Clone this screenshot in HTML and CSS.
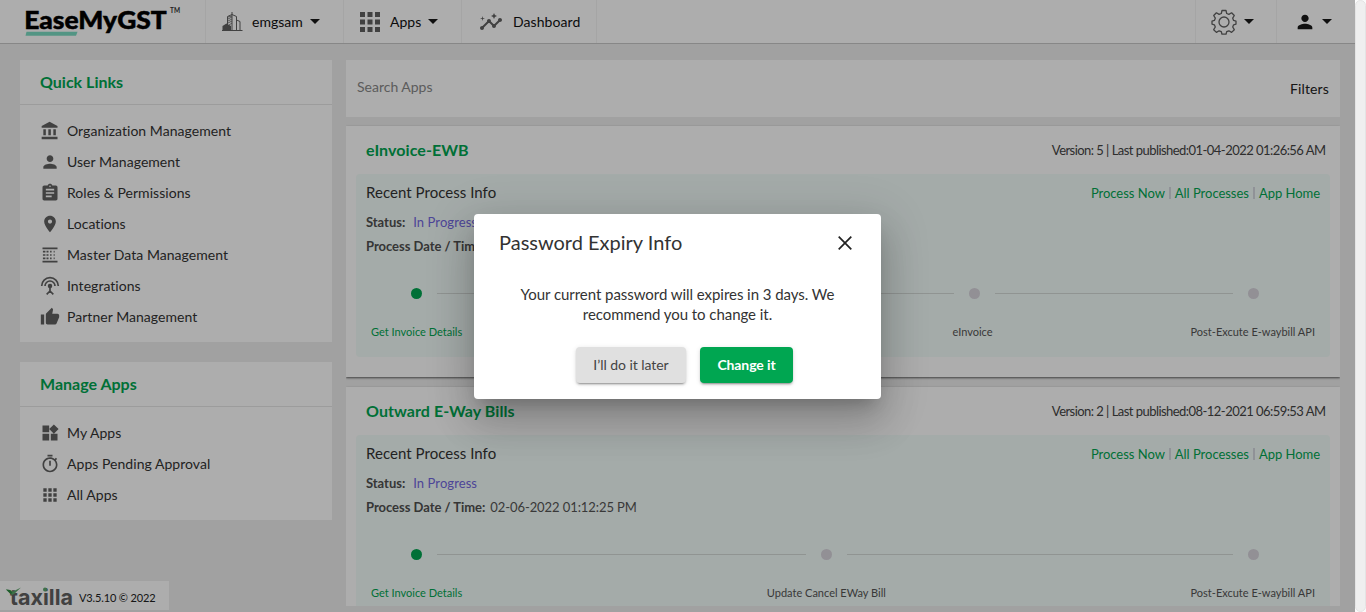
FILE: index.html
```html
<!DOCTYPE html>
<html lang="en">
<head>
<meta charset="utf-8">
<title>EaseMyGST</title>
<link rel="stylesheet" href="styles.css">
</head>
<body>
<svg class="defs" width="0" height="0">
  <symbol id="grid" viewBox="0 0 24 24"><path d="M4 8h4V4H4v4zm6 12h4v-4h-4v4zm-6 0h4v-4H4v4zm0-6h4v-4H4v4zm6 0h4v-4h-4v4zm6-10v4h4V4h-4zm-6 4h4V4h-4v4zm6 6h4v-4h-4v4zm0 6h4v-4h-4v4z"/></symbol>
  <symbol id="person" viewBox="0 0 24 24"><path d="M12 12c2.210 0 4-1.790 4-4s-1.790-4-4-4-4 1.790-4 4 1.790 4 4 4zm0 2c-2.670 0-8 1.340-8 4v2h16v-2c0-2.660-5.330-4-8-4z"/></symbol>
</svg>
<div class="page">
  <header class="topbar">
    <div class="brand">
      <svg width="165" height="42" viewBox="0 0 165 42">
        <path d="M1.500 31.800H52.500l-1.500 4H.5z" fill="#7bdcc3"/>
        <text class="logo" x="-.8" y="29.300" textLength="142.500" lengthAdjust="spacingAndGlyphs">EaseMyGST</text>
        <text class="tm" x="145" y="12.500" textLength="10" lengthAdjust="spacingAndGlyphs">TM</text>
      </svg>
    </div>
    <div class="nav org">
      <svg width="21" height="20" viewBox="0 0 21 20" fill="none" stroke="#606060"><path d="M0 18.500h20.500M5.500 14V4.500l4.500-2 4.500 2V18M10 0v18M14.500 8l3.500 1.500V18"/><path fill="#606060" stroke="none" d="M.5 14l4-2.500 4.500 2.500v4.500H.5z"/><path d="M6 7l4-2M6 9l4-2M6 11l4-2M7 13l3-2M6 5l4-1" stroke-width=".8"/></svg>
      <span>emgsam</span><i class="caret"></i>
    </div>
    <div class="nav apps">
      <svg width="30" height="30" class="ic"><use href="#grid"/></svg>
      <span>Apps</span><i class="caret"></i>
    </div>
    <div class="nav dash">
      <svg width="24" height="24" viewBox="0 0 24 24" class="ic"><path d="M21 8c-1.450 0-2.260 1.440-1.930 2.510l-3.550 3.560c-.3-.09-.74-.09-1.040 0l-2.550-2.550C12.270 10.450 11.460 9 10 9c-1.450 0-2.270 1.440-1.930 2.520l-4.560 4.550C2.440 15.740 1 16.550 1 18c0 1.100.9 2 2 2 1.450 0 2.260-1.440 1.930-2.510l4.550-4.560c.3.09.74.09 1.040 0l2.550 2.550C12.730 16.550 13.540 18 15 18c1.450 0 2.270-1.440 1.930-2.520l3.560-3.550C21.560 12.260 23 11.450 23 10c0-1.100-.9-2-2-2z"/><path d="M15 9l.94-2.070L18 6l-2.060-.93L15 3l-.92 2.070L12 6l2.080.93zM3.500 11L4 9l2-.5L4 8l-.5-2L3 8l-2 .5L3 9z"/></svg>
      <span>Dashboard</span>
    </div>
    <div class="nav gear">
      <svg width="26" height="26" viewBox="0 0 26 26" fill="none" stroke="#616161" stroke-width="1.300"><circle cx="13" cy="13" r="5"/><path stroke-linejoin="round" d="M11 1.500h4l.7 3 2.200.9 2.700-1.600 2.700 2.700-1.600 2.700.9 2.200 2.400.7v3l-2.400.7-.9 2.200 1.600 2.700-2.700 2.700-2.700-1.600-2.200.9-.7 2.500h-4l-.7-2.500-2.200-.9-2.700 1.600-2.700-2.700 1.600-2.700-.9-2.200-2.400-.7v-3l2.400-.7.9-2.200-1.600-2.700 2.700-2.700 2.700 1.600 2.200-.9z"/></svg>
      <i class="caret"></i>
    </div>
    <div class="nav user">
      <svg width="22" height="22" class="dark"><use href="#person"/></svg><i class="caret"></i>
    </div>
  </header>
  <main class="content">
    <aside class="side">
      <section class="box quick">
        <h2>Quick Links</h2>
        <ul>
          <li><svg viewBox="0 0 24 24"><path d="M4 10v7h3v-7H4zm6 0v7h3v-7h-3zM2 22h19v-3H2v3zm14-12v7h3v-7h-3zm-4.500-9L2 6v2h19V6l-9.500-5z"/></svg>Organization Management</li>
          <li><svg><use href="#person"/></svg>User Management</li>
          <li><svg viewBox="0 0 24 24"><path d="M19 3h-4.180C14.400 1.840 13.300 1 12 1c-1.300 0-2.400.84-2.820 2H5c-1.100 0-2 .9-2 2v14c0 1.100.9 2 2 2h14c1.100 0 2-.9 2-2V5c0-1.100-.9-2-2-2zm-7 0c.55 0 1 .45 1 1s-.45 1-1 1-1-.45-1-1 .45-1 1-1zm2 14H7v-2h7v2zm3-4H7v-2h10v2zm0-4H7V7h10v2z"/></svg>Roles &amp; Permissions</li>
          <li><svg viewBox="0 0 24 24"><path d="M12 2C8.130 2 5 5.130 5 9c0 5.250 7 13 7 13s7-7.750 7-13c0-3.870-3.130-7-7-7zm0 9.500c-1.380 0-2.500-1.120-2.500-2.500s1.120-2.500 2.500-2.500 2.500 1.120 2.500 2.500-1.120 2.500-2.500 2.500z"/></svg>Locations</li>
          <li><svg viewBox="0 0 24 24"><path d="M3 3h18v2H3zM3 19h18v2H3z"/><g fill="none" stroke="#616161" stroke-dasharray="2 2"><path stroke-width="3" d="M5 7v11"/><path stroke-width="2.400" d="M9 7v11"/><path stroke-width="1.800" d="M13 7v11"/><path stroke-width="1.200" d="M17 7v11"/></g></svg>Master Data Management</li>
          <li><svg viewBox="0 0 24 24" fill="none" stroke="#616161" stroke-width="2"><path d="M2 12a10 10 0 0 1 20 0M6 12a6 6 0 0 1 12 0M12 13v5l-4 4M12 18l4 4"/><circle cx="12" cy="12" r="1.700" fill="#616161"/></svg>Integrations</li>
          <li><svg viewBox="0 0 24 24"><path d="M1 21h4V9H1v12zm22-11c0-1.100-.9-2-2-2h-6.310l.95-4.570.03-.32c0-.41-.17-.79-.44-1.060L14.170 1 7.590 7.590C7.220 7.950 7 8.450 7 9v10c0 1.100.9 2 2 2h9c.83 0 1.540-.5 1.840-1.220l3.020-7.050c.09-.23.14-.47.14-.73v-2z"/></svg>Partner Management</li>
        </ul>
      </section>
      <section class="box manage">
        <h2>Manage Apps</h2>
        <ul>
          <li><svg viewBox="0 0 24 24"><path d="M13 13v8h8v-8h-8zM3 21h8v-8H3v8zM3 3v8h8V3H3zm13.660-1.310L11 7.340 16.660 13l5.660-5.660-5.660-5.650z"/></svg>My Apps</li>
          <li><svg viewBox="0 0 24 24"><path d="M15 1H9v2h6V1zm-4 13h2V8h-2v6zm8.030-6.610l1.420-1.420c-.43-.51-.9-.99-1.410-1.410l-1.420 1.420C16.070 4.740 14.120 4 12 4c-4.970 0-9 4.030-9 9s4.020 9 9 9 9-4.030 9-9c0-2.120-.74-4.070-1.970-5.610zM12 20c-3.870 0-7-3.130-7-7s3.130-7 7-7 7 3.130 7 7-3.130 7-7 7z"/></svg>Apps Pending Approval</li>
          <li><svg><use href="#grid"/></svg>All Apps</li>
        </ul>
      </section>
    </aside>
    <div class="main">
      <section class="search"><span class="ph">Search Apps</span><span class="filters">Filters</span></section>
      <article class="card">
        <div class="head"><h3>eInvoice-EWB</h3><span class="ver">Version: 5 | Last published:01-04-2022 01:26:56 AM</span></div>
        <div class="panel">
          <div class="row"><h4>Recent Process Info</h4><div class="links"><a>Process Now</a><i></i><a>All Processes</a><i></i><a>App Home</a></div></div>
          <p><b>Status:</b><span class="prog">In Progress</span></p>
          <p><b>Process Date / Time:</b></p>
          <div class="track"><i class="dot on"></i><i class="line"></i><i class="dot"></i><i class="line"></i><i class="dot"></i><i class="line"></i><i class="dot"></i></div>
          <div class="labels four"><span class="on">Get Invoice Details</span><span>eInvoice</span><span>Post-Excute E-waybill API</span></div>
        </div>
      </article>
      <article class="card">
        <div class="head"><h3>Outward E-Way Bills</h3><span class="ver">Version: 2 | Last published:08-12-2021 06:59:53 AM</span></div>
        <div class="panel">
          <div class="row"><h4>Recent Process Info</h4><div class="links strong"><a>Process Now</a><i></i><a>All Processes</a><i></i><a>App Home</a></div></div>
          <p><b>Status:</b><span class="prog">In Progress</span></p>
          <p><b>Process Date / Time:</b><span class="date">02-06-2022 01:12:25 PM</span></p>
          <div class="track three"><i class="dot on"></i><i class="line"></i><i class="dot"></i><i class="line"></i><i class="dot"></i></div>
          <div class="labels"><span class="on">Get Invoice Details</span><span>Update Cancel EWay Bill</span><span>Post-Excute E-waybill API</span></div>
        </div>
      </article>
    </div>
  </main>
  <footer class="version">
    <svg width="68" height="24" viewBox="0 0 68 24"><text class="taxilla" x="4" y="19.500" textLength="63" lengthAdjust="spacingAndGlyphs">taxilla</text><path d="M0 4.500l4 .5 3 1.500L15 2.500 8 9l-2 1z" fill="#5da66b"/><path d="M0 4.500l4 .5 2.500 3-2 1z" fill="#2f8a42"/><circle cx="39" cy="4.500" r="2" fill="#5da66b"/></svg>
    <span>V3.5.10 © 2022</span>
  </footer>
</div>
<div class="scrollbar"><div class="thumb"></div></div>
<div class="overlay">
  <div class="modal">
    <div class="mhead"><h1>Password Expiry Info</h1><svg width="14" height="14" viewBox="0 0 14 14"><path d="M.7.7l12.600 12.600M13.300.7L.7 13.300" stroke="#222" stroke-width="1.700"/></svg></div>
    <p>Your current password will expires in 3 days. We<br>recommend you to change it.</p>
    <div class="actions"><button class="later">I’ll do it later</button><button class="change">Change it</button></div>
  </div>
</div>
</body>
</html>
```
FILE: styles.css
```css
* { box-sizing: border-box; }
body { margin: 0; height: 612px; overflow: hidden; display: flex; background: #ededed; font: 14px/20px Lato, "Liberation Sans", sans-serif; color: #222; }
h1, h2, h3, h4, p, ul { margin: 0; padding: 0; font-weight: 400; }
svg { display: block; flex: none; }
.defs { position: absolute; }
.page { width: 1355px; height: 612px; overflow: hidden; }
.topbar { height: 44px; background: #fff; border-bottom: 1px solid #c8c8c8; display: flex; }
.brand { width: 206px; padding-left: 25px; border-right: 1px solid #f3f3f3; }
.logo { font: 900 25.5px Lato, sans-serif; fill: #000; stroke: #000; stroke-width: .5px; }
.tm { font: 700 7px Lato, sans-serif; fill: #333; }
.nav { display: flex; align-items: center; border-right: 1px solid #f3f3f3; color: #111; }
.ic { fill: #616161; }
.dark { fill: #181818; }
.caret { border: 5px solid transparent; border-top-color: #181818; border-bottom: 0; flex: none; }
.org { width: 138px; padding-left: 16px; }
.org span { width: 51px; margin: 0 7px 0 9px; }
.apps { width: 118px; padding-left: 11px; }
.apps span { width: 31px; margin: 0 7px 0 5px; }
.dash { width: 135px; padding-left: 17px; }
.dash span { margin-left: 10px; letter-spacing: .08px; }
.gear { width: 82px; margin-left: auto; border-left: 1px solid #f3f3f3; padding-left: 15px; gap: 7px; }
.user { width: 78px; border: 0; padding-left: 17px; gap: 6px; }
.content { display: flex; padding: 16px 15px 0 20px; gap: 14px; }
.side { width: 312px; flex: none; }
.box { background: #fff; margin-bottom: 20px; }
.box h2 { height: 45px; padding: 12px 20px 0; border-bottom: 1px solid #e6e6e6; font-size: 16px; font-weight: 700; color: #00a651; }
.box ul { list-style: none; padding: 10px 20px; }
.quick ul { height: 237px; }
.manage ul { height: 113px; }
.box li { height: 31px; display: flex; align-items: center; gap: 7px; color: #333; letter-spacing: .04px; }
.box li svg { width: 20px; height: 20px; fill: #616161; }
.box li svg[fill="none"] { fill: none; }
.main { width: 994px; height: 546px; overflow: hidden; }
.search { height: 57px; background: #fff; margin-bottom: 9px; padding: 17px 11px 0; display: flex; justify-content: space-between; }
.ph { color: #888; }
.filters { padding-top: 2px; letter-spacing: .15px; }
.card { background: #fff; height: 251px; margin-bottom: 10px; padding: 14px 10px 0; box-shadow: 0 1px 2px rgba(0,0,0,.6); }
.head { display: flex; justify-content: space-between; padding: 0 5px 0 10px; height: 34px; }
.head h3 { font-size: 16px; font-weight: 700; color: #00a651; letter-spacing: .07px; }
.ver { font-size: 13px; color: #444; letter-spacing: -.54px; margin-right: -.5px; }
.panel { height: 183px; background: #f2fcf9; border-radius: 4px; padding: 8px 10px 0; color: #555; font-size: 13px; }
.row { display: flex; justify-content: space-between; height: 28px; }
.row h4 { font-size: 15px; color: #333; letter-spacing: .04px; }
.links { display: flex; align-items: center; height: 20px; color: #00a651; padding-top: 2px; letter-spacing: -.03px; }
.links i { width: 2px; height: 12px; background: #d4d8df; margin: 0 4px; }
.panel p { height: 24px; line-height: 24px; white-space: nowrap; }
.panel b { font-weight: 700; color: #505050; margin-right: 8px; letter-spacing: -.03px; }
.prog { color: #7267e0; letter-spacing: .08px; }
.date { letter-spacing: -.08px; margin-left: -3px; }
.track { display: flex; align-items: center; height: 11px; margin: 30px 61px 0 45px; }
.dot { width: 11px; height: 11px; border-radius: 50%; background: #d7d4dc; flex: none; }
.dot.on { background: #00a651; }
.line { height: 1px; flex: 1; background: #d5dad8; margin: 0 15px; }
.three .line:first-of-type, .three .on + .line { flex: 369; }
.three .dot:not(.on) + .line { flex: 387; }
.labels { display: flex; justify-content: space-between; font-size: 11px; padding: 23px 5px 0; }
.four span:nth-child(2) { margin: 0 198px 0 auto; }
.labels .on { color: #00a651; }
.version { position: absolute; left: 0; top: 581px; width: 169px; height: 29px; background: #fff; display: flex; padding: 2px 0 0 6px; gap: 5px; align-items: center; }
.version span { font-size: 11px; padding-top: 3px; letter-spacing: -.15px; }
.taxilla { font: 700 22px Inter, sans-serif; fill: #606060; }
.scrollbar { width: 11px; background: #fafafa; }
.thumb { height: 612px; border: 1px solid #e4e4e4; border-radius: 6px; background: #efefef; }
.overlay { position: absolute; left: 0; top: 0; width: 1355px; height: 612px; background: rgba(0,0,0,.32); display: flex; align-items: center; justify-content: center; }
.modal { width: 407px; height: 185px; background: #fff; border-radius: 4px; box-shadow: 0 11px 15px -7px rgba(0,0,0,.2), 0 24px 38px 3px rgba(0,0,0,.14), 0 9px 46px 8px rgba(0,0,0,.12); color: #333; }
.mhead { display: flex; justify-content: space-between; align-items: center; height: 58px; padding: 0 29px 0 25px; }
.mhead h1 { font-size: 20px; padding-bottom: 2px; }
.modal p { height: 75px; padding-top: 12px; text-align: center; font-size: 15px; letter-spacing: -.05px; }
.actions { display: flex; justify-content: center; gap: 14px; padding-left: 14px; }
button { border: 0; height: 36px; padding: 0; border-radius: 4px; font: 400 14px Lato, sans-serif; box-shadow: 0 3px 1px -2px rgba(0,0,0,.2), 0 2px 2px rgba(0,0,0,.14), 0 1px 5px rgba(0,0,0,.12); }
.later { width: 110px; background: #e0e0e0; color: #444; letter-spacing: -.05px; }
.change { width: 93px; background: #00a651; color: #fff; font-weight: 700; letter-spacing: -.1px; }
```
